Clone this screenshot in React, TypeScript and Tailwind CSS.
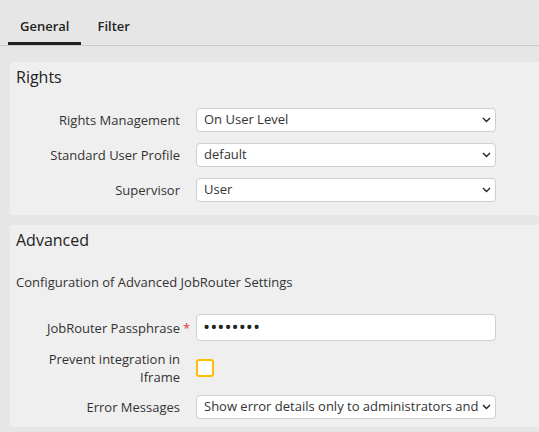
import { useState } from 'react';

const font = { fontFamily: '"Open Sans", "Liberation Sans", sans-serif' };

function Chevron() {
  return (
    <svg className="pointer-events-none absolute right-[5px] top-1/2 -translate-y-1/2" width="9" height="6" viewBox="0 0 9 6">
      <path d="M1 1 L4.5 4.5 L8 1" fill="none" stroke="#222" strokeWidth="1.4" />
    </svg>
  );
}

function Select({ value, options }: { value: string; options: string[] }) {
  return (
    <div className="relative w-[300px]">
      <select
        defaultValue={value}
        className="block h-[24px] w-full appearance-none rounded-[4px] border border-[#cfcfcf] bg-white pl-[7px] pr-[17px] text-[13px] text-[#333] outline-none"
      >
        {options.map(o => (
          <option key={o}>{o}</option>
        ))}
      </select>
      <Chevron />
    </div>
  );
}

function Row({ label, children, className = '' }: { label: React.ReactNode; children: React.ReactNode; className?: string }) {
  return (
    <div className={'flex items-center ' + className}>
      <div className="relative w-[170px] text-right text-[13px] leading-[18px] text-[#333]">{label}</div>
      <div className="ml-[16px]">{children}</div>
    </div>
  );
}

export default function App() {
  const [tab, setTab] = useState('General');
  const [prevent, setPrevent] = useState(false);

  return (
    <div className="h-[432px] w-[539px] overflow-hidden bg-[#e6e6e6]" style={font}>
      <div className="flex h-[46px] border-b border-[#cbcbcb] pl-[8px]">
        {['General', 'Filter'].map(t => (
          <button
            key={t}
            onClick={() => setTab(t)}
            className={
              'mr-[4px] flex h-[45px] items-center border-b-[3px] px-[12px] pt-[11px] text-[13px] font-semibold text-[#222] ' +
              (tab === t ? 'border-[#222]' : 'border-transparent')
            }
          >
            {t}
          </button>
        ))}
      </div>

      <div className="ml-[10px] mt-[16px] h-[153px] rounded-l-[4px] bg-[#efefef] pt-[4px]">
        <h2 className="pl-[6px] text-[16px] font-medium leading-[22px] text-[#222]">Rights</h2>
        <div className="mt-[20px] flex flex-col gap-[11px]">
          <Row label="Rights Management">
            <Select value="On User Level" options={['On User Level', 'On Group Level']} />
          </Row>
          <Row label="Standard User Profile">
            <Select value="default" options={['default']} />
          </Row>
          <Row label="Supervisor">
            <Select value="User" options={['User', 'Group']} />
          </Row>
        </div>
      </div>

      <div className="ml-[10px] mt-[10px] h-[202px] rounded-l-[4px] bg-[#efefef] pt-[4px]">
        <h2 className="pl-[6px] text-[16px] font-medium leading-[22px] text-[#222]">Advanced</h2>
        <p className="mt-[22px] pl-[6px] text-[13px] leading-[18px] text-[#333]">Configuration of Advanced JobRouter Settings</p>
        <Row
          className="mt-[23px]"
          label={
            <>
              JobRouter Passphrase
              <span className="absolute left-full top-0 ml-[3px] text-[#e53935]">*</span>
            </>
          }
        >
          <input
            type="password"
            defaultValue="12345678"
            className="block h-[27px] w-[300px] rounded-[4px] border border-[#cfcfcf] bg-white px-[6px] text-[19px] text-[#222] outline-none"
          />
        </Row>
        <Row className="mt-[9px]" label={<>Prevent integration in<br />Iframe</>}>
          <button
            onClick={() => setPrevent(p => !p)}
            className="block h-[18px] w-[18px] rounded-[3px] border-2 border-[#ffbf00] bg-white"
          >
            {prevent && (
              <svg viewBox="0 0 14 14" width="14" height="14">
                <path d="M2 7 L6 11 L12 3" fill="none" stroke="#333" strokeWidth="2" />
              </svg>
            )}
          </button>
        </Row>
        <Row className="mt-[9px]" label="Error Messages">
          <Select
            value="Show error details only to administrators and developers"
            options={['Show error details only to administrators and developers', 'Show error details to all users']}
          />
        </Row>
      </div>
    </div>
  );
}
